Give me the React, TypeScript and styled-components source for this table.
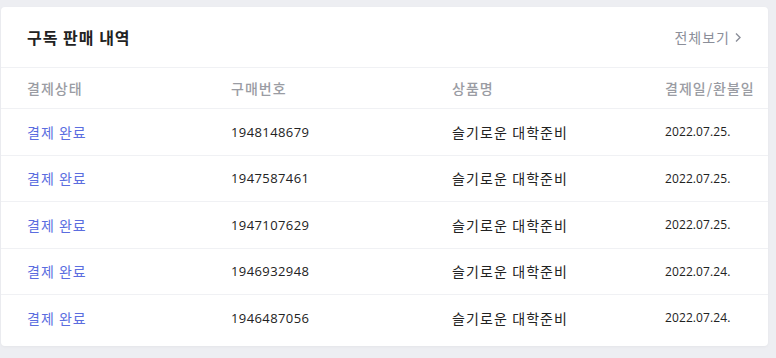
import React, { FC } from 'react'
import styled, { createGlobalStyle } from 'styled-components'

const GlobalStyle = createGlobalStyle`
  html, body {
    margin: 0;
    padding: 0;
    background: #edeef2;
  }
  body {
    font-family: 'Noto Sans CJK KR', 'Noto Sans', sans-serif;
  }
`

interface ISale {
  status: string
  orderNo: string
  product: string
  date: string
}

const sales: ISale[] = [
  { status: '결제 완료', orderNo: '1948148679', product: '슬기로운 대학준비', date: '2022.07.25.' },
  { status: '결제 완료', orderNo: '1947587461', product: '슬기로운 대학준비', date: '2022.07.25.' },
  { status: '결제 완료', orderNo: '1947107629', product: '슬기로운 대학준비', date: '2022.07.25.' },
  { status: '결제 완료', orderNo: '1946932948', product: '슬기로운 대학준비', date: '2022.07.24.' },
  { status: '결제 완료', orderNo: '1946487056', product: '슬기로운 대학준비', date: '2022.07.24.' },
]

const Page = styled.div`
  padding: 7px 8px 13px 1px;
`

const Card = styled.section`
  background: #fff;
  border-radius: 4px;
  box-shadow: 0 1px 3px rgba(0, 0, 0, 0.04);
  padding-bottom: 5px;
`

const Header = styled.header`
  height: 61px;
  display: flex;
  align-items: center;
  justify-content: space-between;
  padding: 0 26px 0 26px;
  border-bottom: 1px solid #f0f1f4;
  box-sizing: border-box;
`

const Title = styled.h2`
  margin: 0;
  font-size: 16px;
  font-weight: 700;
  color: #222;
  letter-spacing: 1px;
`

const MoreLink = styled.a`
  display: flex;
  align-items: center;
  gap: 4px;
  font-size: 14px;
  letter-spacing: 1px;
  color: #8b8e99;
  text-decoration: none;
  cursor: pointer;
`

const Row = styled.div<{ head?: boolean }>`
  display: grid;
  grid-template-columns: 204px 221px 213px 1fr;
  align-items: center;
  height: ${(p) => (p.head ? '40px' : '46.5px')};
  padding-left: 26px;
  box-sizing: border-box;
  & + & {
    border-top: 1px solid #f0f1f4;
  }
`

const HeadCell = styled.div`
  font-size: 14px;
  font-weight: 500;
  letter-spacing: 1px;
  color: #9a9ca3;
  white-space: nowrap;
`

const StatusCell = styled.div`
  font-size: 14px;
  letter-spacing: 1px;
  color: #5b6ddf;
`

const Cell = styled.div<{ small?: boolean }>`
  font-family: 'Open Sans', 'Noto Sans CJK KR', sans-serif;
  font-size: ${(p) => (p.small ? '12px' : '13px')};
  letter-spacing: ${(p) => (p.small ? '0.1px' : '0.4px')};
  color: #222;
`

const ProductCell = styled.div`
  font-size: 14px;
  letter-spacing: 1.1px;
  color: #222;
`

const Chevron: FC = () => (
  <svg width="8" height="11" viewBox="0 0 8 11" fill="none">
    <path d="M2 1.5 L6 5.5 L2 9.5" stroke="#8b8e99" strokeWidth="1.4" />
  </svg>
)

export default function App(): JSX.Element {
  return (
    <Page>
      <GlobalStyle />
      <Card>
        <Header>
          <Title>구독 판매 내역</Title>
          <MoreLink>
            전체보기
            <Chevron />
          </MoreLink>
        </Header>
        <Row head>
          <HeadCell>결제상태</HeadCell>
          <HeadCell>구매번호</HeadCell>
          <HeadCell>상품명</HeadCell>
          <HeadCell>결제일/환불일</HeadCell>
        </Row>
        {sales.map((s) => (
          <Row key={s.orderNo}>
            <StatusCell>{s.status}</StatusCell>
            <Cell>{s.orderNo}</Cell>
            <ProductCell>{s.product}</ProductCell>
            <Cell small>{s.date}</Cell>
          </Row>
        ))}
      </Card>
    </Page>
  )
}
